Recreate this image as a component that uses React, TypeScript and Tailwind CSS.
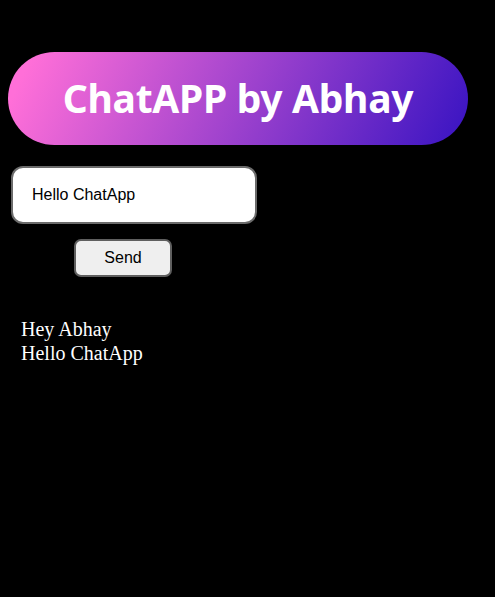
import { useState } from "react"

export default function App() {
    const [text, setText] = useState("Hello ChatApp");
    const [messages] = useState<string[]>(["Hey Abhay", "Hello ChatApp"]);

    return (
        <div className="min-h-[597px] bg-black pt-[52px] px-[8px]">
            <div className="w-[460px] h-[93px] rounded-[47px] bg-[linear-gradient(115deg,#ff6fd8_5%,#3813c2_100%)] flex items-center justify-center">
                <h1 className="text-white text-[39px] font-bold font-['Noto_Sans',sans-serif] tracking-[-0.3px]">ChatAPP by Abhay</h1>
            </div>
            <div className="mt-[21px] pl-[3px]">
                <input
                    value={text}
                    onChange={(e) => setText(e.target.value)}
                    className="w-[246px] h-[58px] rounded-[12px] border-2 border-[#6b6b6b] bg-white pl-[19px] text-[16px] text-black font-['Liberation_Sans',sans-serif] outline-none"
                />
            </div>
            <div className="mt-[15px] pl-[66px]">
                <button className="w-[98px] h-[38px] rounded-[7px] border-2 border-[#5f5f5f] bg-[#efefef] text-[16px] text-black font-['Liberation_Sans',sans-serif]">
                    Send
                </button>
            </div>
            <div className="mt-[40px] pl-[13px] text-white text-[20px] leading-[24px] font-['Liberation_Serif',serif]">
                {messages.map((m, i) => (
                    <div key={i}>{m}</div>
                ))}
            </div>
        </div>
    )
}
